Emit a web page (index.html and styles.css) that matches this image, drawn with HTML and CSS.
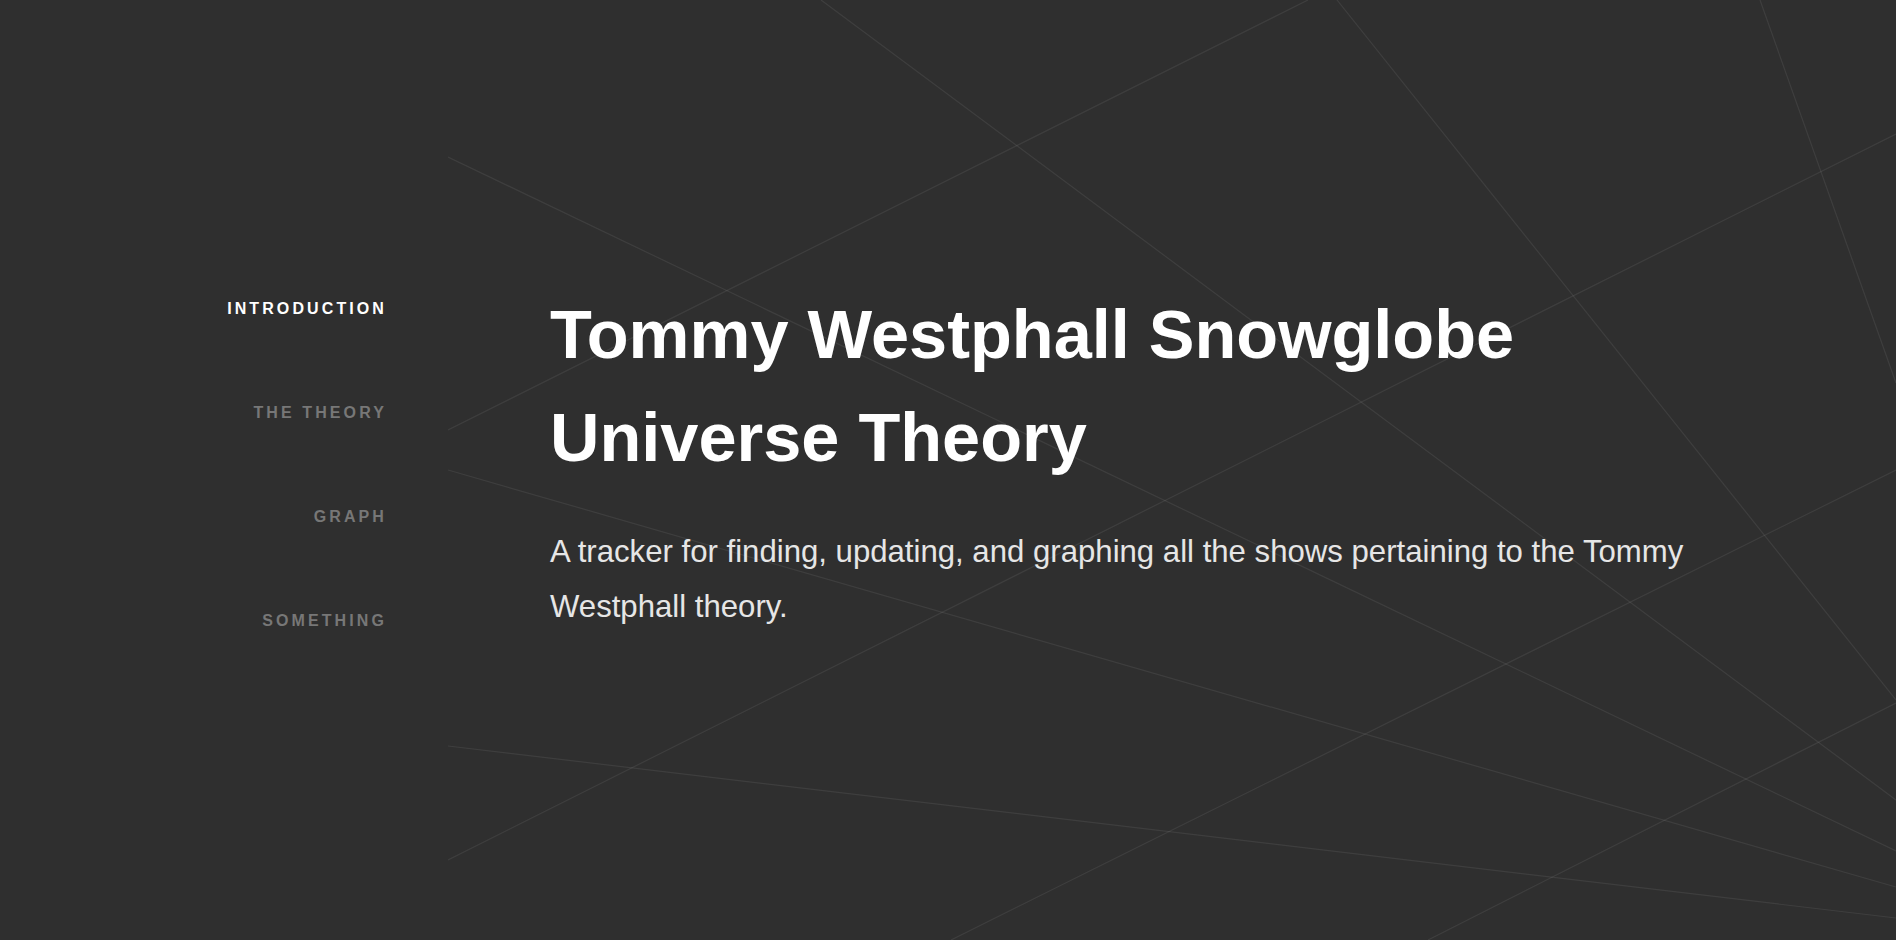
FILE: index.html
```html
<!DOCTYPE html>
<html lang="en">
<head>
<meta charset="utf-8">
<title>Tommy Westphall Snowglobe Universe Theory</title>
<link rel="stylesheet" href="styles.css">
</head>
<body>
<div class="page">
  <svg class="backdrop" width="1448" height="940" viewBox="448 0 1448 940" aria-hidden="true">
    <g class="web">
      <line x1="448" y1="157" x2="1896" y2="851"/>
      <line x1="448" y1="430" x2="1308" y2="0"/>
      <line x1="821" y1="0" x2="1896" y2="800"/>
      <line x1="1337" y1="0" x2="1896" y2="700"/>
      <line x1="1760" y1="0" x2="1896" y2="383"/>
      <line x1="448" y1="860" x2="1896" y2="134"/>
      <line x1="448" y1="470" x2="1896" y2="887"/>
      <line x1="448" y1="746" x2="1896" y2="918"/>
      <line x1="1896" y1="470" x2="951" y2="940"/>
      <line x1="1896" y1="703" x2="1428" y2="940"/>
    </g>
  </svg>
  <div class="layout">
    <nav class="sidenav">
      <a class="navlink active" href="#intro">Introduction</a>
      <a class="navlink" href="#theory">The Theory</a>
      <a class="navlink" href="#graph">Graph</a>
      <a class="navlink" href="#something">Something</a>
    </nav>
    <main class="content" id="intro">
      <h1 class="title">Tommy Westphall Snowglobe Universe Theory</h1>
      <p class="lead">A tracker for finding, updating, and graphing all the shows pertaining to the Tommy Westphall theory.</p>
    </main>
  </div>
</div>
</body>
</html>
```
FILE: styles.css
```css
html, body {
  margin: 0;
  padding: 0;
  background: #2f2f2f;
  height: 100%;
  overflow: hidden;
}

body {
  font-family: "Liberation Sans", Arial, Helvetica, sans-serif;
  color: #ffffff;
}

.page {
  position: relative;
  width: 100%;
  height: 940px;
}

.backdrop {
  position: absolute;
  left: 448px;
  top: 0;
  z-index: 0;
}

.web line {
  stroke: rgba(255, 255, 255, 0.075);
  stroke-width: 1.2;
}

.layout {
  position: relative;
  z-index: 1;
  display: flex;
  align-items: flex-start;
  padding-top: 283px;
}

.sidenav {
  width: 387px;
  flex: none;
  display: flex;
  flex-direction: column;
  align-items: flex-end;
  gap: 84.3px;
  padding-top: 15.5px;
}

.navlink {
  display: block;
  font-size: 16px;
  line-height: 20px;
  font-weight: 700;
  letter-spacing: 3.1px;
  text-transform: uppercase;
  text-decoration: none;
  color: #777777;
}

.navlink.active {
  color: #ffffff;
}

.content {
  margin-left: 163px;
  max-width: 1200px;
}

.title {
  margin: 0;
  font-size: 68.5px;
  line-height: 103px;
  font-weight: 700;
  color: #ffffff;
}

.lead {
  margin: 34.5px 0 0;
  font-size: 31.15px;
  line-height: 55.2px;
  font-weight: 400;
  color: #e6e6e6;
}
```
